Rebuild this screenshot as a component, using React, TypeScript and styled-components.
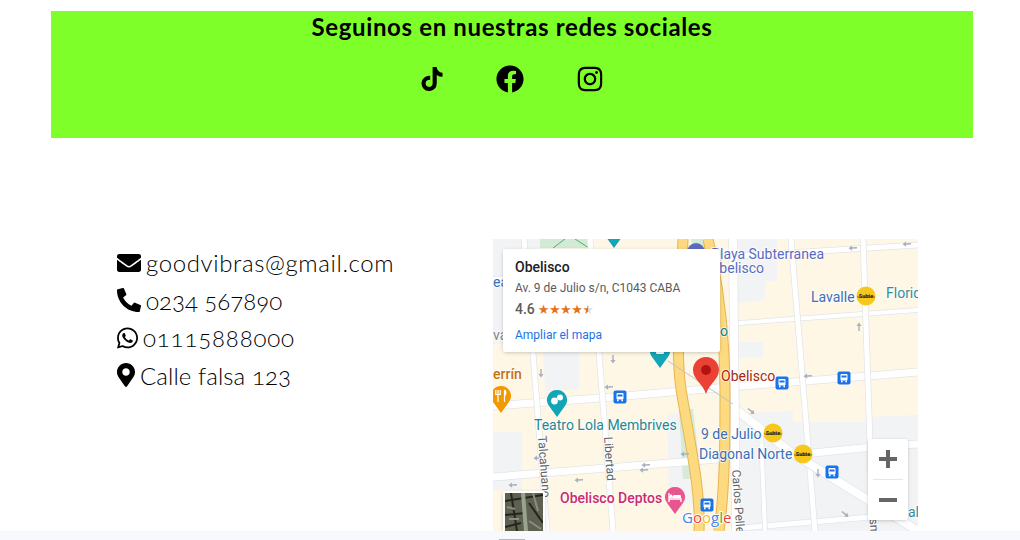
import React from 'react';
import styled, { createGlobalStyle } from 'styled-components';
import {
  FaEnvelope,
  FaFacebook,
  FaInstagram,
  FaMapMarkerAlt,
  FaPhoneAlt,
  FaTiktok,
  FaWhatsapp,
} from 'react-icons/fa';

const GlobalStyle = createGlobalStyle`
  html, body {
    margin: 0;
    padding: 0;
    height: 540px;
    overflow: hidden;
    background: #ffffff;
    font-family: "Lato", "Liberation Sans", sans-serif;
    color: #000000;
  }
`;

const Banner = styled.section`
  margin: 11px 47px 0 51px;
  height: 127px;
  background: #7fff2a;
  text-align: center;
`;

const BannerTitle = styled.h2`
  margin: 0;
  padding-top: 1px;
  font-size: 24px;
  line-height: 30px;
  font-weight: 700;
  letter-spacing: 0.64px;
`;

const SocialRow = styled.div`
  display: flex;
  justify-content: center;
  align-items: center;
  gap: 52px;
  margin-top: 23px;
`;

const SocialLink = styled.a<{ $size: number }>`
  display: flex;
  color: #000000;
  font-size: ${(p) => p.$size}px;
`;

const Contact = styled.section`
  display: grid;
  grid-template-columns: 376px 425px;
  margin-top: 101px;
  padding-left: 117px;
  height: 292px;
`;

const ContactList = styled.ul`
  list-style: none;
  margin: 5px 0 0;
  padding: 0;
`;

const ContactItem = styled.li<{ $iconWidth: number; $spacing: number }>`
  display: flex;
  align-items: center;
  gap: 5px;
  height: 37.5px;
  font-size: 24px;
  font-weight: 300;
  letter-spacing: ${(p) => p.$spacing}px;
  font-variant-numeric: oldstyle-nums;

  svg {
    flex: none;
    width: ${(p) => p.$iconWidth}px;
  }
`;

const MapFrame = styled.div`
  position: relative;
  width: 425px;
  height: 292px;
  overflow: hidden;
  font-family: "Roboto", "Liberation Sans", sans-serif;
`;

const InfoCard = styled.div`
  position: absolute;
  left: 10px;
  top: 10px;
  width: 217px;
  height: 103px;
  box-sizing: border-box;
  padding: 10px 12px;
  background: #ffffff;
  border-radius: 2px;
  box-shadow: 0 1px 4px -1px rgba(0, 0, 0, 0.3);
`;

const PlaceName = styled.div`
  font-size: 14px;
  line-height: 17px;
  font-weight: 500;
  color: #202124;
`;

const PlaceAddress = styled.div`
  margin-top: 5px;
  font-size: 12px;
  line-height: 15px;
  color: #5b5b5b;
`;

const RatingRow = styled.div`
  display: flex;
  align-items: center;
  gap: 3px;
  margin-top: 5px;
  font-size: 14px;
  line-height: 17px;
  font-weight: 500;
  color: #5b5b5b;
`;

const Stars = styled.span`
  font-size: 13px;
  letter-spacing: -0.55px;
  color: #e7711b;
  font-family: "DejaVu Sans", sans-serif;
`;

const HalfStar = styled.span`
  background: linear-gradient(90deg, #e7711b 58%, #d9d9d9 58%);
  -webkit-background-clip: text;
  background-clip: text;
  color: transparent;
`;

const MapLink = styled.a`
  display: block;
  margin-top: 10px;
  font-size: 12px;
  line-height: 15px;
  color: #1a73e8;
`;

const ZoomControl = styled.div`
  position: absolute;
  right: 10px;
  top: 200px;
  width: 40px;
  height: 81px;
  display: flex;
  flex-direction: column;
  align-items: center;
  background: #ffffff;
  border-radius: 2px;
  box-shadow: 0 1px 4px -1px rgba(0, 0, 0, 0.3);
`;

const ZoomButton = styled.div`
  flex: 1;
  display: flex;
  align-items: center;
  justify-content: center;
`;

const ZoomDivider = styled.div`
  width: 30px;
  height: 1px;
  background: #e6e6e6;
`;

const SatelliteThumb = styled.div`
  position: absolute;
  left: 10px;
  top: 252px;
  width: 42px;
  height: 42px;
  box-sizing: border-box;
  border: 2px solid #ffffff;
  border-radius: 2px;
  box-shadow: 0 1px 4px -1px rgba(0, 0, 0, 0.3);
  background: #5f6350;
  overflow: hidden;
`;

const BottomBand = styled.div`
  height: 9px;
  background: #f7f9fd;
  overflow: hidden;
`;

const BandMark = styled.div`
  width: 26px;
  height: 1px;
  margin: 8px 0 0 499px;
  background: #b9b9bb;
`;

const blocksGray = [
  '237,0 284,0 284,42 272,42 272,61 237,65',
  '0,0 47,0 47,105 0,105',
  '50,105 86,105 86,150 52,152',
  '240,175 300,172 300,183 375,183 375,178 425,176 425,292 240,292',
  '242,103 270,103 270,118 242,118',
  '0,193 29,193 29,251 0,251',
  '174,174 187,174 200,264 176,264',
];

const roads: Array<[string, number]> = [
  ['0,167 120,158 225,149 425,133', 7],
  ['0,238 190,223 235,219', 7],
  ['227,18 425,6', 5],
  ['232,85 425,71', 4],
  ['0,40 50,36', 4],
  ['237,290 425,274', 5],
  ['290,217 380,208 425,205', 7],
  ['31,0 54,292', 5],
  ['97,0 120,292', 5],
  ['298,0 322,292', 5],
  ['370,0 380,292', 5],
  ['268,195 272,292', 4],
  ['236,165 296,212 425,292', 8],
  ['240,0 243,292', 8],
];

const arrows: Array<[number, number, number]> = [
  [45, 219, 176],
  [116, 148, 176],
  [151, 231, 176],
  [153, 226, 176],
  [86, 241, 176],
  [20, 246, 176],
  [48, 134, 90],
  [120, 120, 90],
  [360, 9, 176],
  [414, 5, 176],
  [315, 137, 176],
  [366, 88, 270],
  [258, 172, 40],
  [352, 275, 40],
  [325, 234, 90],
  [192, 215, 176],
];

const buses: Array<[number, number]> = [
  [289, 144],
  [351, 139],
  [127, 158],
  [214, 266],
  [339, 233],
];

const subtes: Array<[number, number]> = [
  [373, 57],
  [280, 194],
  [310, 215],
];

const MapPin = ({
  x,
  y,
  color,
  children,
}: {
  x: number;
  y: number;
  color: string;
  children?: React.ReactNode;
}) => (
  <g transform={`translate(${x - 10} ${y - 10})`}>
    <path d="M10 0a10 10 0 0 1 7.6 16.5L10 27 2.4 16.5A10 10 0 0 1 10 0z" fill={color} />
    {children}
  </g>
);

const MapLabel = ({
  x,
  y,
  color,
  anchor = 'start',
  size = 14,
  weight = 400,
  rotate,
  children,
}: {
  x: number;
  y: number;
  color: string;
  anchor?: 'start' | 'end';
  size?: number;
  weight?: number;
  rotate?: number;
  children: React.ReactNode;
}) => (
  <text
    x={x}
    y={y}
    fill={color}
    fontSize={size}
    fontWeight={weight}
    textAnchor={anchor}
    stroke="#ffffff"
    strokeWidth="2"
    strokeOpacity="0.7"
    paintOrder="stroke"
    transform={rotate ? `rotate(${rotate} ${x} ${y})` : undefined}
  >
    {children}
  </text>
);

const StreetMap = () => (
  <svg width="425" height="292" viewBox="0 0 425 292" fontFamily="Roboto, sans-serif">
    <rect width="425" height="292" fill="#fef7e6" />
    {blocksGray.map((points) => (
      <polygon key={points} points={points} fill="#f1f3f4" />
    ))}
    <polygon points="47,0 96,0 97,9 47,9" fill="#d3ead6" />
    <path d="M60 9 72 0M82 0 96 9" stroke="#5aa872" strokeWidth="1" fill="none" />
    <polygon points="186,170 200,170 208,240 190,240" fill="#d5ebd9" />
    <polygon points="198,0 214,0 226,80 226,96 214,70" fill="#d5ebd9" />

    {roads.map(([points, width]) => (
      <g key={points}>
        <polyline points={points} fill="none" stroke="#e3e5e8" strokeWidth={width + 1.5} />
        <polyline points={points} fill="none" stroke="#ffffff" strokeWidth={width} />
      </g>
    ))}
    <path d="M190 0 C188 60 182 110 188 150 C196 200 208 250 206 292" fill="none" stroke="#e7b454" strokeWidth="11" />
    <path d="M190 0 C188 60 182 110 188 150 C196 200 208 250 206 292" fill="none" stroke="#fdd97f" strokeWidth="9" />
    <path d="M215 0 C224 40 232 90 232 150 C232 200 232 250 226 292" fill="none" stroke="#e7b454" strokeWidth="11" />
    <path d="M215 0 C224 40 232 90 232 150 C232 200 232 250 226 292" fill="none" stroke="#fdd97f" strokeWidth="9" />
    <line x1="175" y1="122" x2="240" y2="165" stroke="#bfc3c9" strokeWidth="1" />

    {arrows.map(([x, y, angle]) => (
      <path
        key={`${x}-${y}`}
        transform={`translate(${x} ${y}) rotate(${angle})`}
        d="M-4-.7H1V-2.6L4.5 0 1 2.6V.7H-4z"
        fill="#a9b0bd"
      />
    ))}

    <circle cx="203" cy="13" r="9" fill="#5c6bc0" />
    <MapPin x={167} y={112} color="#12a5b8">
      <rect x="6" y="6" width="8" height="7" rx="1" fill="#ffffff" />
    </MapPin>
    <MapPin x={121} y={-8} color="#12a5b8" />
    <MapPin x={64} y={161} color="#12a5b8">
      <circle cx="7.5" cy="11" r="3.4" fill="#ffffff" />
      <circle cx="13" cy="7.5" r="3" fill="#ffffff" />
    </MapPin>
    <MapPin x={8} y={157} color="#f29900">
      <path d="M7 4v12M4.8 4v4.5h4.4V4M13.5 4v12M13.5 4c1.6 1 2 4 0 6" stroke="#ffffff" strokeWidth="1.2" fill="none" />
    </MapPin>
    <MapPin x={182} y={258} color="#e8558f">
      <path d="M4 6v9M4 12h12v3M4 10h12" stroke="#ffffff" strokeWidth="1.4" fill="none" />
      <rect x="8" y="8" width="8" height="3" rx="1" fill="#ffffff" />
      <circle cx="6" cy="9" r="1.4" fill="#ffffff" />
    </MapPin>

    {buses.map(([x, y]) => (
      <g key={`${x}-${y}`} transform={`translate(${x - 6.5} ${y - 6.5})`}>
        <rect width="13" height="13" rx="2" fill="#1a73e8" />
        <rect x="3" y="2.5" width="7" height="6.5" rx="1" fill="#ffffff" />
        <rect x="4" y="4" width="5" height="2" fill="#1a73e8" />
        <rect x="3.5" y="9" width="1.6" height="1.8" fill="#ffffff" />
        <rect x="7.9" y="9" width="1.6" height="1.8" fill="#ffffff" />
      </g>
    ))}

    {subtes.map(([x, y]) => (
      <g key={`${x}-${y}`}>
        <circle cx={x} cy={y} r="9.5" fill="#f6c81d" />
        <line x1={x - 9} y1={y + 1} x2={x + 9} y2={y + 1} stroke="#333" strokeWidth="0.6" />
        <text x={x} y={y + 1.8} fontSize="5.5" fontWeight="700" textAnchor="middle" fill="#1d1d1d">
          Subte
        </text>
      </g>
    ))}

    <MapLabel x={331} y={20} anchor="end" color="#5c6bc0">Playa Subterranea</MapLabel>
    <MapLabel x={271} y={34} anchor="end" color="#5c6bc0">Obelisco</MapLabel>
    <MapLabel x={318} y={63} color="#3b6fb8">Lavalle</MapLabel>
    <MapLabel x={393} y={59} color="#2f8f9f">Florid</MapLabel>
    <MapLabel x={0} y={48} color="#3b6fb8">ea</MapLabel>
    <MapLabel x={0} y={101} color="#80868b">va</MapLabel>
    <MapLabel x={227} y={97} color="#12808f">o</MapLabel>
    <MapLabel x={228} y={142} color="#a52714">Obelisco</MapLabel>
    <MapLabel x={0} y={140} color="#c5700c" weight={500}>errín</MapLabel>
    <MapLabel x={41} y={191} color="#1d8896">Teatro Lola Membrives</MapLabel>
    <MapLabel x={208} y={200} color="#3b6fb8">9 de Julio</MapLabel>
    <MapLabel x={206} y={220} color="#3b6fb8">Diagonal Norte</MapLabel>
    <MapLabel x={67} y={264} color="#cc2b6f" weight={500}>Obelisco Deptos</MapLabel>
    <MapLabel x={45} y={197} color="#5f6368" size={12} rotate={86}>Talcahuano</MapLabel>
    <MapLabel x={111} y={198} color="#5f6368" size={12} rotate={86}>Libertad</MapLabel>
    <MapLabel x={239} y={231} color="#5f6368" size={12} rotate={86}>Carlos Pellegrini</MapLabel>
    <MapLabel x={376} y={273} color="#5f6368" size={12} rotate={86}>Esmeralda</MapLabel>
    <MapLabel x={415} y={278} color="#2f8f9f">al</MapLabel>

    <g fontFamily="'Open Sans', sans-serif" fontSize="15" stroke="#ffffff" strokeWidth="2" paintOrder="stroke">
      <text x="189" y="284">
        <tspan fill="#4285f4">G</tspan>
        <tspan fill="#ea4335">o</tspan>
        <tspan fill="#fbbc05">o</tspan>
        <tspan fill="#4285f4">g</tspan>
        <tspan fill="#34a853">l</tspan>
        <tspan fill="#ea4335">e</tspan>
      </text>
    </g>

    <g transform="translate(200 118)">
      <path d="M13 0C5.8 0 0 5.8 0 13c0 9 10 14 13 24 3-10 13-15 13-24C26 5.8 20.2 0 13 0z" fill="#ea4335" />
      <circle cx="13" cy="13" r="5" fill="#b31412" />
    </g>
  </svg>
);

const SatelliteTexture = () => (
  <svg width="38" height="38" viewBox="0 0 38 38">
    <rect width="38" height="38" fill="#5e6150" />
    <path d="M0 8 38 2M0 22 20 20M6 0 12 38M24 10 38 30M0 34 16 30" stroke="#23261f" strokeWidth="2" fill="none" />
    <path d="M18 0 21 38" stroke="#9aa48c" strokeWidth="4" fill="none" />
    <path d="M28 0 33 18M2 14 10 16M24 28 36 36M4 26 14 26" stroke="#8b8d80" strokeWidth="2" fill="none" />
  </svg>
);

export default function App() {
  return (
    <>
      <GlobalStyle />
      <Banner>
        <BannerTitle>Seguinos en nuestras redes sociales</BannerTitle>
        <SocialRow>
          <SocialLink $size={24}><FaTiktok /></SocialLink>
          <SocialLink $size={28}><FaFacebook /></SocialLink>
          <SocialLink $size={28}><FaInstagram /></SocialLink>
        </SocialRow>
      </Banner>

      <Contact>
        <ContactList>
          <ContactItem $iconWidth={24} $spacing={0.62}><FaEnvelope />goodvibras@gmail.com</ContactItem>
          <ContactItem $iconWidth={24} $spacing={0}><FaPhoneAlt />0234 567890</ContactItem>
          <ContactItem $iconWidth={21} $spacing={0.85}><FaWhatsapp />01115888000</ContactItem>
          <ContactItem $iconWidth={18} $spacing={0.09}><FaMapMarkerAlt />Calle falsa 123</ContactItem>
        </ContactList>

        <MapFrame>
          <StreetMap />
          <InfoCard>
            <PlaceName>Obelisco</PlaceName>
            <PlaceAddress>Av. 9 de Julio s/n, C1043 CABA</PlaceAddress>
            <RatingRow>4.6 <Stars>★★★★<HalfStar>★</HalfStar></Stars></RatingRow>
            <MapLink>Ampliar el mapa</MapLink>
          </InfoCard>
          <ZoomControl>
            <ZoomButton>
              <svg width="18" height="18" viewBox="0 0 18 18"><path d="M7 0h4v7h7v4h-7v7H7v-7H0V7h7z" fill="#666666" /></svg>
            </ZoomButton>
            <ZoomDivider />
            <ZoomButton>
              <svg width="18" height="18" viewBox="0 0 18 18"><path d="M0 7h18v4H0z" fill="#666666" /></svg>
            </ZoomButton>
          </ZoomControl>
          <SatelliteThumb><SatelliteTexture /></SatelliteThumb>
        </MapFrame>
      </Contact>

      <BottomBand><BandMark /></BottomBand>
    </>
  );
}
